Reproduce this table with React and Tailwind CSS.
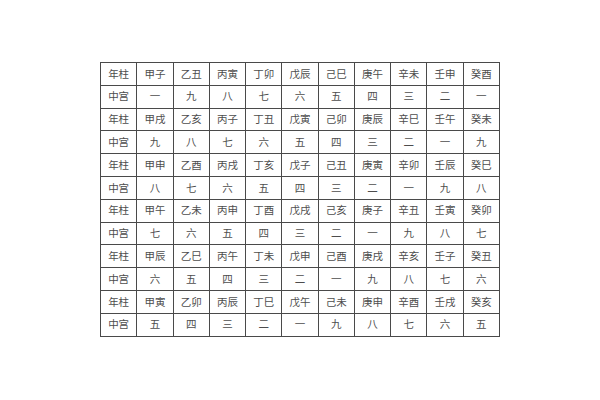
const rows = [
  ["年柱", "甲子", "乙丑", "丙寅", "丁卯", "戊辰", "己巳", "庚午", "辛未", "壬申", "癸酉"],
  ["中宫", "一", "九", "八", "七", "六", "五", "四", "三", "二", "一"],
  ["年柱", "甲戌", "乙亥", "丙子", "丁丑", "戊寅", "己卯", "庚辰", "辛巳", "壬午", "癸未"],
  ["中宫", "九", "八", "七", "六", "五", "四", "三", "二", "一", "九"],
  ["年柱", "甲申", "乙酉", "丙戌", "丁亥", "戊子", "己丑", "庚寅", "辛卯", "壬辰", "癸巳"],
  ["中宫", "八", "七", "六", "五", "四", "三", "二", "一", "九", "八"],
  ["年柱", "甲午", "乙未", "丙申", "丁酉", "戊戌", "己亥", "庚子", "辛丑", "壬寅", "癸卯"],
  ["中宫", "七", "六", "五", "四", "三", "二", "一", "九", "八", "七"],
  ["年柱", "甲辰", "乙巳", "丙午", "丁未", "戊申", "己酉", "庚戌", "辛亥", "壬子", "癸丑"],
  ["中宫", "六", "五", "四", "三", "二", "一", "九", "八", "七", "六"],
  ["年柱", "甲寅", "乙卯", "丙辰", "丁巳", "戊午", "己未", "庚申", "辛酉", "壬戌", "癸亥"],
  ["中宫", "五", "四", "三", "二", "一", "九", "八", "七", "六", "五"],
];

export default function App() {
  return (
    <div className="w-[600px] h-[400px] bg-white pt-[62px] font-['Noto_Sans_CJK_SC',sans-serif]">
      <div className="ml-[100px] w-[400px] grid grid-cols-11 border-l border-t border-[#4a4a4a]">
        {rows.flat().map((cell, i) => (
          <div
            key={i}
            className="h-[22.8px] flex items-center justify-center border-r border-b border-[#4a4a4a] text-[10.5px] text-[#4d4d4d] leading-none"
          >
            {cell}
          </div>
        ))}
      </div>
    </div>
  );
}
